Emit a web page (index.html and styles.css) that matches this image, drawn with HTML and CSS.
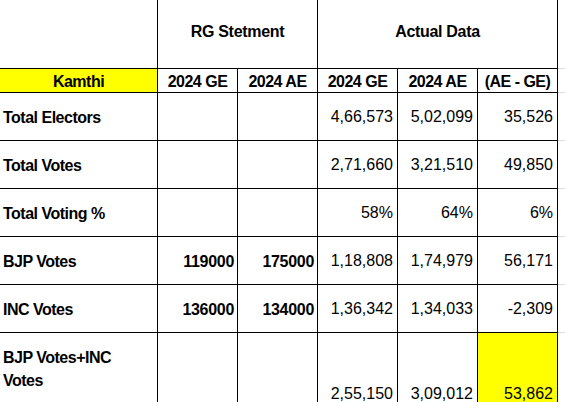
FILE: index.html
```html
<!DOCTYPE html>
<html>
<head>
<meta charset="utf-8">
<link rel="stylesheet" href="styles.css">
</head>
<body>
<div class="sheet">
  <div class="c blank"></div>
  <div class="c title span2">RG Stetment</div>
  <div class="c title span3">Actual Data</div>
  <div class="f"></div>

  <div class="c sub yellow">Kamthi</div>
  <div class="c sub">2024 GE</div>
  <div class="c sub">2024 AE</div>
  <div class="c sub">2024 GE</div>
  <div class="c sub">2024 AE</div>
  <div class="c sub">(AE - GE)</div>
  <div class="f"></div>

  <div class="c lbl">Total Electors</div>
  <div class="c"></div>
  <div class="c"></div>
  <div class="c num">4,66,573</div>
  <div class="c num">5,02,099</div>
  <div class="c num">35,526</div>
  <div class="f"></div>

  <div class="c lbl">Total Votes</div>
  <div class="c"></div>
  <div class="c"></div>
  <div class="c num">2,71,660</div>
  <div class="c num">3,21,510</div>
  <div class="c num">49,850</div>
  <div class="f"></div>

  <div class="c lbl">Total Voting %</div>
  <div class="c"></div>
  <div class="c"></div>
  <div class="c num">58%</div>
  <div class="c num">64%</div>
  <div class="c num">6%</div>
  <div class="f"></div>

  <div class="c lbl">BJP Votes</div>
  <div class="c bnum">119000</div>
  <div class="c bnum">175000</div>
  <div class="c num">1,18,808</div>
  <div class="c num">1,74,979</div>
  <div class="c num">56,171</div>
  <div class="f"></div>

  <div class="c lbl">INC Votes</div>
  <div class="c bnum">136000</div>
  <div class="c bnum">134000</div>
  <div class="c num">1,36,342</div>
  <div class="c num">1,34,033</div>
  <div class="c num">-2,309</div>
  <div class="f"></div>

  <div class="c lbl wrap">BJP Votes+INC<br>Votes</div>
  <div class="c"></div>
  <div class="c"></div>
  <div class="c num bottom">2,55,150</div>
  <div class="c num bottom">3,09,012</div>
  <div class="c num bottom yellow">53,862</div>
  <div class="f"></div>
</div>
</body>
</html>
```
FILE: styles.css
```css
html, body {
  margin: 0;
  padding: 0;
  overflow: hidden;
  background: #ffffff;
}

body {
  font-family: "Liberation Sans", Arial, sans-serif;
  color: #000000;
}

.sheet {
  display: grid;
  grid-template-columns: 158px repeat(5, 80px) 1fr;
  grid-template-rows: 69px 24px repeat(5, 48px) 73px;
  width: 565px;
}

.c {
  box-sizing: border-box;
  border-right: 1px solid #000;
  border-bottom: 1px solid #000;
  display: flex;
  align-items: center;
  white-space: nowrap;
  min-width: 0;
}

.f {
  box-sizing: border-box;
  border-bottom: 1px solid #dadada;
}

.span2 { grid-column: span 2; }
.span3 { grid-column: span 3; }

.title {
  justify-content: center;
  font-weight: bold;
  font-size: 16px;
  letter-spacing: -0.3px;
  padding-bottom: 4px;
}

.sub {
  justify-content: center;
  font-weight: bold;
  font-size: 16px;
  letter-spacing: -0.5px;
  padding-top: 2px;
}

.yellow {
  background: #ffff00;
}

.lbl {
  font-weight: bold;
  font-size: 16px;
  letter-spacing: -0.5px;
  padding-left: 3px;
  padding-top: 2px;
}

.wrap {
  line-height: 23px;
  white-space: normal;
  padding-top: 0;
}

.num {
  justify-content: flex-end;
  font-size: 16px;
  padding-right: 4px;
  padding-top: 1px;
}

.bnum {
  justify-content: flex-end;
  font-weight: bold;
  font-size: 16px;
  letter-spacing: -0.3px;
  padding-right: 3px;
  padding-top: 2px;
}

.bottom {
  align-items: flex-end;
  padding-top: 0;
  padding-bottom: 2px;
}
```
